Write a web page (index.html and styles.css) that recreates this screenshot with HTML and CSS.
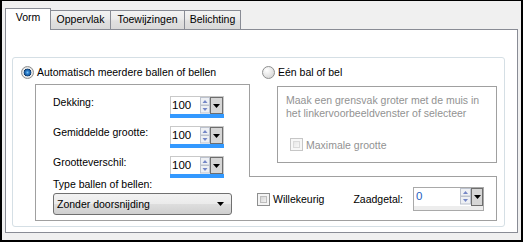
FILE: index.html
```html
<!DOCTYPE html>
<html lang="nl">
<head>
    <meta charset="UTF-8">
    <title>Vorm</title>
    <link rel="stylesheet" href="styles.css">
</head>
<body>

<div class="window">
    <!-- Tabs -->
    <div class="tabs">
        <div class="tab tab-active tab-vorm">Vorm</div>
        <div class="tab tab-oppervlak">Oppervlak</div>
        <div class="tab tab-toewijzingen">Toewijzingen</div>
        <div class="tab tab-belichting">Belichting</div>
    </div>

    <div class="panel">
        <div class="group">

            <!-- Left: automatic -->
            <div class="col-left">
                <div class="radio-row">
                    <span class="radio radio-checked"></span>
                    <span>Automatisch meerdere ballen of bellen</span>
                </div>
                <div class="auto-box">
                    <div class="field-row">
                        <span class="field-label">Dekking:</span>
                        <div class="spin">
                            <div class="spin-top">
                                <span class="spin-value">100</span>
                                <svg class="spin-arrows" width="10" height="17" viewBox="0 0 10 17">
                                    <rect x="0.5" y="0.5" width="9" height="7.5" fill="#eef0f4" stroke="#bcc2ce"/>
                                    <path d="M2.5 6 L5 3 L7.5 6Z" fill="#7586c6"/>
                                    <rect x="0.5" y="8.5" width="9" height="7.5" fill="#eef0f4" stroke="#bcc2ce"/>
                                    <path d="M2.5 11 L5 14 L7.5 11Z" fill="#7586c6"/>
                                </svg>
                                <span class="spin-drop"><svg width="7" height="4" viewBox="0 0 7 4"><path d="M0 0 H7 L3.5 4Z" fill="#000"/></svg></span>
                            </div>
                            <div class="spin-bar"></div>
                        </div>
                    </div>
                    <div class="field-row">
                        <span class="field-label">Gemiddelde grootte:</span>
                        <div class="spin">
                            <div class="spin-top">
                                <span class="spin-value">100</span>
                                <svg class="spin-arrows" width="10" height="17" viewBox="0 0 10 17">
                                    <rect x="0.5" y="0.5" width="9" height="7.5" fill="#eef0f4" stroke="#bcc2ce"/>
                                    <path d="M2.5 6 L5 3 L7.5 6Z" fill="#7586c6"/>
                                    <rect x="0.5" y="8.5" width="9" height="7.5" fill="#eef0f4" stroke="#bcc2ce"/>
                                    <path d="M2.5 11 L5 14 L7.5 11Z" fill="#7586c6"/>
                                </svg>
                                <span class="spin-drop"><svg width="7" height="4" viewBox="0 0 7 4"><path d="M0 0 H7 L3.5 4Z" fill="#000"/></svg></span>
                            </div>
                            <div class="spin-bar"></div>
                        </div>
                    </div>
                    <div class="field-row field-row-last">
                        <span class="field-label">Grootteverschil:</span>
                        <div class="spin">
                            <div class="spin-top">
                                <span class="spin-value">100</span>
                                <svg class="spin-arrows" width="10" height="17" viewBox="0 0 10 17">
                                    <rect x="0.5" y="0.5" width="9" height="7.5" fill="#eef0f4" stroke="#bcc2ce"/>
                                    <path d="M2.5 6 L5 3 L7.5 6Z" fill="#7586c6"/>
                                    <rect x="0.5" y="8.5" width="9" height="7.5" fill="#eef0f4" stroke="#bcc2ce"/>
                                    <path d="M2.5 11 L5 14 L7.5 11Z" fill="#7586c6"/>
                                </svg>
                                <span class="spin-drop"><svg width="7" height="4" viewBox="0 0 7 4"><path d="M0 0 H7 L3.5 4Z" fill="#000"/></svg></span>
                            </div>
                            <div class="spin-bar"></div>
                        </div>
                    </div>
                    <div class="type-label">Type ballen of bellen:</div>
                    <div class="select">
                        <span>Zonder doorsnijding</span>
                        <svg width="7" height="4" viewBox="0 0 7 4"><path d="M0 0 H7 L3.5 4Z" fill="#000"/></svg>
                    </div>
                </div>
            </div>

            <!-- Right: single ball -->
            <div class="col-right">
                <div class="radio-row radio-row-right">
                    <span class="radio"></span>
                    <span>Eén bal of bel</span>
                </div>
                <div class="single-area">
                    <div class="single-box">
                        <p class="hint">Maak een grensvak groter met de muis in<br>het linkervoorbeeldvenster of selecteer</p>
                        <div class="check-row check-row-disabled">
                            <span class="check check-disabled"></span>
                            <span>Maximale grootte</span>
                        </div>
                    </div>
                </div>
                <div class="seed-strip">
                    <div class="check-row">
                        <span class="check"></span>
                        <span>Willekeurig</span>
                    </div>
                    <span class="seed-label">Zaadgetal:</span>
                    <div class="spin-seed">
                        <div class="spin-top spin-top-seed">
                            <span class="spin-value spin-value-seed">0</span>
                            <svg class="spin-arrows" width="11" height="17" viewBox="0 0 11 17">
                                <rect x="0.5" y="0.5" width="10" height="7.5" fill="#eef0f4" stroke="#bcc2ce"/>
                                <path d="M3 6 L5.5 3 L8 6Z" fill="#7586c6"/>
                                <rect x="0.5" y="8.5" width="10" height="7.5" fill="#eef0f4" stroke="#bcc2ce"/>
                                <path d="M3 11 L5.5 14 L8 11Z" fill="#7586c6"/>
                            </svg>
                            <span class="spin-drop"><svg width="7" height="4" viewBox="0 0 7 4"><path d="M0 0 H7 L3.5 4Z" fill="#000"/></svg></span>
                        </div>
                        <div class="spin-foot"></div>
                    </div>
                </div>
            </div>

        </div>
    </div>
</div>

</body>
</html>
```

FILE: styles.css
```css
body {
    margin: 0;
    background-color: #f0f0f0;
}
.window {
    width: 523px;
    height: 242px;
    box-sizing: border-box;
    border: 2px solid #000;
    border-top-width: 1px;
    padding: 7px 3px;
    background-color: #f0f0f0;
    font-family: "Liberation Sans", Arial, sans-serif;
    font-size: 10.5px;
    color: #000;
}

/* tabs */
.tabs {
    display: flex;
    align-items: flex-end;
    height: 21px;
}
.tab {
    box-sizing: border-box;
    height: 19px;
    margin-left: -1px;
    padding-top: 2px;
    line-height: 13px;
    text-align: center;
    border: 1px solid #898c95;
    border-bottom: none;
    background: linear-gradient(#f3f3f3, #ebebeb 45%, #e0e0e0 55%, #d9d9d9);
}
.tab-active {
    position: relative;
    z-index: 1;
    height: 22px;
    margin-left: 0;
    margin-bottom: -1px;
    background: #fff;
}
.tab-vorm { width: 46px; }
.tab-oppervlak { width: 61px; }
.tab-toewijzingen { width: 75px; }
.tab-belichting { width: 57px; }

.panel {
    height: 204px;
    box-sizing: border-box;
    border: 1px solid #898c95;
    background-color: #fff;
    padding: 27px 12px 5px 6px;
}
.group {
    display: flex;
    height: 170px;
    box-sizing: border-box;
    border: 1px solid #d5dfe5;
    border-radius: 3px;
}
.col-left { width: 236px; }
.col-right { width: 248px; }

/* radios and checks */
.radio-row {
    display: flex;
    align-items: center;
    gap: 3px;
    height: 26px;
    box-sizing: border-box;
    padding: 2px 0 0 8px;
}
.radio-row-right { padding-left: 13px; }
.radio {
    width: 13px;
    height: 13px;
    box-sizing: border-box;
    border: 1px solid #8e8f8f;
    border-radius: 50%;
    background: radial-gradient(circle at 35% 30%, #ffffff, #e4e4e4 55%, #cdcdcd);
}
.radio-checked {
    background: radial-gradient(circle at 50% 50%, #7cc4f4 0, #2f83d0 1.5px, #17569a 3px, #0e365f 3.6px, #f2f2f2 4.2px, #dcdcdc 5.5px);
}
.check-row {
    display: flex;
    align-items: center;
    gap: 3px;
}
.check {
    width: 13px;
    height: 13px;
    box-sizing: border-box;
    border: 1px solid #8e8f8f;
    padding: 2px;
    background: linear-gradient(135deg, #cfcfcf, #f8f8f8) content-box, #f4f4f4;
    box-shadow: inset 0 0 0 2px #f4f4f4, inset 0 0 0 3px #bdbdbd;
}
.check-disabled {
    border-color: #c6c6c6;
    background: linear-gradient(135deg, #e4e4e4, #fafafa) content-box, #f7f7f7;
    box-shadow: inset 0 0 0 2px #f7f7f7, inset 0 0 0 3px #dadada;
}

/* automatic box */
.auto-box {
    width: 214px;
    height: 137px;
    box-sizing: border-box;
    margin-left: 22px;
    border: 1px solid #a0a0a0;
    border-right: none;
    padding: 11px 0 0 17px;
}
.field-row {
    display: flex;
    height: 22px;
    margin-bottom: 8px;
}
.field-row-last { margin-bottom: 0; }
.field-label {
    width: 117px;
    line-height: 12px;
}
.spin {
    width: 54px;
    display: flex;
    flex-direction: column;
}
.spin-top {
    display: flex;
    height: 18px;
    box-sizing: border-box;
    border: 1px solid #c9c9c9;
    border-bottom: none;
    background-color: #fff;
}
.spin-value {
    flex: 1;
    padding-left: 1px;
    font-size: 11.5px;
    line-height: 17px;
}
.spin-arrows { flex-shrink: 0; }
.spin-drop {
    display: flex;
    align-items: center;
    justify-content: center;
    width: 13px;
    height: 17px;
    box-sizing: border-box;
    border: 1px solid #6e6e6e;
    background-color: #d6d6d6;
}
.spin-bar {
    height: 4px;
    background-color: #3399ff;
}
.type-label {
    line-height: 12px;
}
.select {
    display: flex;
    align-items: center;
    justify-content: space-between;
    width: 179px;
    height: 22px;
    box-sizing: border-box;
    margin-top: 3px;
    padding: 0 7px 0 3px;
    border: 1px solid #707070;
    border-radius: 3px;
    background: linear-gradient(#f2f2f2, #ebebeb 48%, #dddddd 52%, #cfcfcf);
}

/* single ball */
.single-area {
    height: 92px;
    box-sizing: border-box;
    border-left: 1px solid #a0a0a0;
    padding: 2px 0 0 27px;
}
.single-box {
    width: 220px;
    height: 77px;
    box-sizing: border-box;
    border: 1px solid #a0a0a0;
    padding: 7px 0 0 8px;
    color: #929292;
}
.hint {
    margin: 0;
    line-height: 13px;
}
.check-row-disabled {
    margin: 18px 0 0 4px;
}

/* seed strip */
.seed-strip {
    display: flex;
    align-items: center;
    height: 45px;
    box-sizing: border-box;
    border: 1px solid #a0a0a0;
    border-left: none;
    padding: 1px 12px 0 8px;
}
.seed-label {
    margin-left: auto;
    margin-right: 10px;
}
.spin-seed {
    width: 71px;
    height: 24px;
    box-sizing: border-box;
    border: 1px solid #a9a9a9;
    display: flex;
    flex-direction: column;
}
.spin-top-seed {
    height: 18px;
    border: none;
}
.spin-value-seed {
    padding-left: 2px;
    color: #1f5fbf;
}
.spin-top-seed .spin-drop { width: 12px; height: 18px; }
.spin-foot {
    flex: 1;
    background-color: #ededed;
}
```
